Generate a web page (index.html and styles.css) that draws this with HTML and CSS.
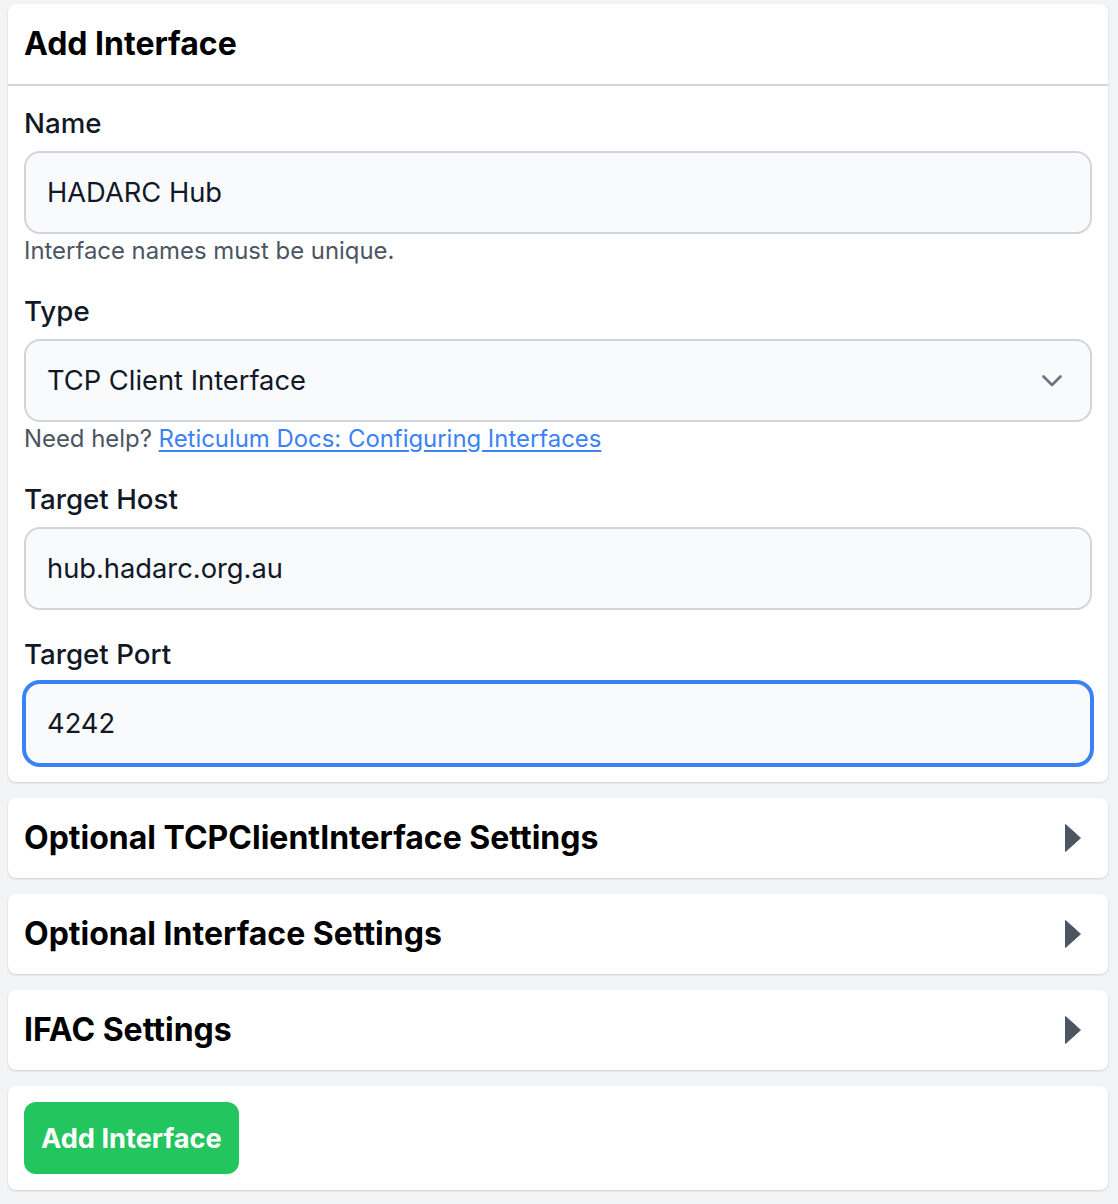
FILE: index.html
```html
<!DOCTYPE html>
<html lang="en">
<head>
<meta charset="utf-8">
<title>Add Interface</title>
<link rel="stylesheet" href="styles.css">
</head>
<body>
<main class="page">
  <section class="card">
    <div class="card-header">
      <h2 class="card-title">Add Interface</h2>
    </div>
    <div class="card-body">
      <div class="field">
        <label class="label" for="name">Name</label>
        <input class="input" id="name" type="text" value="HADARC Hub">
        <p class="help">Interface names must be unique.</p>
      </div>
      <div class="field">
        <label class="label" for="type">Type</label>
        <div class="select">
          <span class="select-value">TCP Client Interface</span>
          <svg class="chevron" width="20" height="12" viewBox="0 0 20 12" aria-hidden="true">
            <polyline points="1.5,1.5 10,10 18.5,1.5" fill="none" stroke="#6b7280" stroke-width="2.6" stroke-linecap="round" stroke-linejoin="round"/>
          </svg>
        </div>
        <p class="help">Need help? <a class="link" href="#">Reticulum Docs: Configuring Interfaces</a></p>
      </div>
      <div class="field">
        <label class="label" for="host">Target Host</label>
        <input class="input" id="host" type="text" value="hub.hadarc.org.au">
      </div>
      <div class="field">
        <label class="label" for="port">Target Port</label>
        <input class="input input-focus" id="port" type="text" value="4242">
      </div>
    </div>
  </section>

  <section class="card collapse">
    <h3 class="collapse-title">Optional TCPClientInterface Settings</h3>
    <svg class="arrow" width="16" height="28" viewBox="0 0 16 28" aria-hidden="true"><polygon points="0.5,0.5 15.5,14 0.5,27.5" fill="#4b5563" stroke="#4b5563" stroke-width="1" stroke-linejoin="round"/></svg>
  </section>

  <section class="card collapse">
    <h3 class="collapse-title">Optional Interface Settings</h3>
    <svg class="arrow" width="16" height="28" viewBox="0 0 16 28" aria-hidden="true"><polygon points="0.5,0.5 15.5,14 0.5,27.5" fill="#4b5563" stroke="#4b5563" stroke-width="1" stroke-linejoin="round"/></svg>
  </section>

  <section class="card collapse">
    <h3 class="collapse-title">IFAC Settings</h3>
    <svg class="arrow" width="16" height="28" viewBox="0 0 16 28" aria-hidden="true"><polygon points="0.5,0.5 15.5,14 0.5,27.5" fill="#4b5563" stroke="#4b5563" stroke-width="1" stroke-linejoin="round"/></svg>
  </section>

  <section class="card actions">
    <button class="btn" type="button">Add Interface</button>
  </section>
</main>
</body>
</html>
```

FILE: styles.css
```css
* { box-sizing: border-box; }

html, body {
  margin: 0;
  padding: 0;
  background: #f3f4f6;
}

body {
  font-family: Inter, "Noto Sans", "Liberation Sans", sans-serif;
  color: #111827;
}

.page {
  display: flex;
  flex-direction: column;
  gap: 16px;
  padding: 4px 10px 14px 8px;
}

.card {
  background: #ffffff;
  border-radius: 8px;
  box-shadow: 0 1px 3px rgba(0,0,0,0.10), 0 1px 2px rgba(0,0,0,0.06);
}

.card-header {
  padding: 16px;
  border-bottom: 2px solid #d1d5db;
}

.card-title {
  margin: 0;
  font-size: 32px;
  line-height: 48px;
  font-weight: 700;
  color: #000;
}

.card-body {
  padding: 17px 16px;
  display: flex;
  flex-direction: column;
  gap: 24px;
}

.field {
  display: flex;
  flex-direction: column;
}

.label {
  font-size: 27.7px;
  line-height: 40px;
  font-weight: 500;
  color: #111827;
  margin-bottom: 8px;
}

.input, .select {
  width: 100%;
  height: 83px;
  padding: 0 21px;
  border: 2px solid #d1d5db;
  border-radius: 16px;
  background: #f9fafb;
  font-family: inherit;
  font-size: 27.3px;
  color: #111827;
  outline: none;
}

.input-focus {
  border-color: #3b82f6;
  box-shadow: 0 0 0 2px #3b82f6;
}

.select {
  display: flex;
  align-items: center;
  justify-content: space-between;
}

.chevron {
  margin-right: 7px;
}

.help {
  margin: 1px 0 0;
  font-size: 23.9px;
  line-height: 32px;
  color: #4b5563;
}

.link {
  color: #3b82f6;
  text-decoration: underline;
  text-underline-offset: 3px;
}

.collapse {
  display: flex;
  align-items: center;
  justify-content: space-between;
  padding: 16px 27px 16px 16px;
}

.collapse-title {
  margin: 0;
  font-size: 32px;
  line-height: 48px;
  font-weight: 700;
  color: #000;
}

.actions {
  padding: 16px;
}

.btn {
  display: block;
  height: 72px;
  padding: 0 17px;
  border: 0;
  border-radius: 12px;
  background: #22c55e;
  color: #ffffff;
  font-family: inherit;
  font-size: 27.2px;
  font-weight: 700;
  cursor: pointer;
}
```
